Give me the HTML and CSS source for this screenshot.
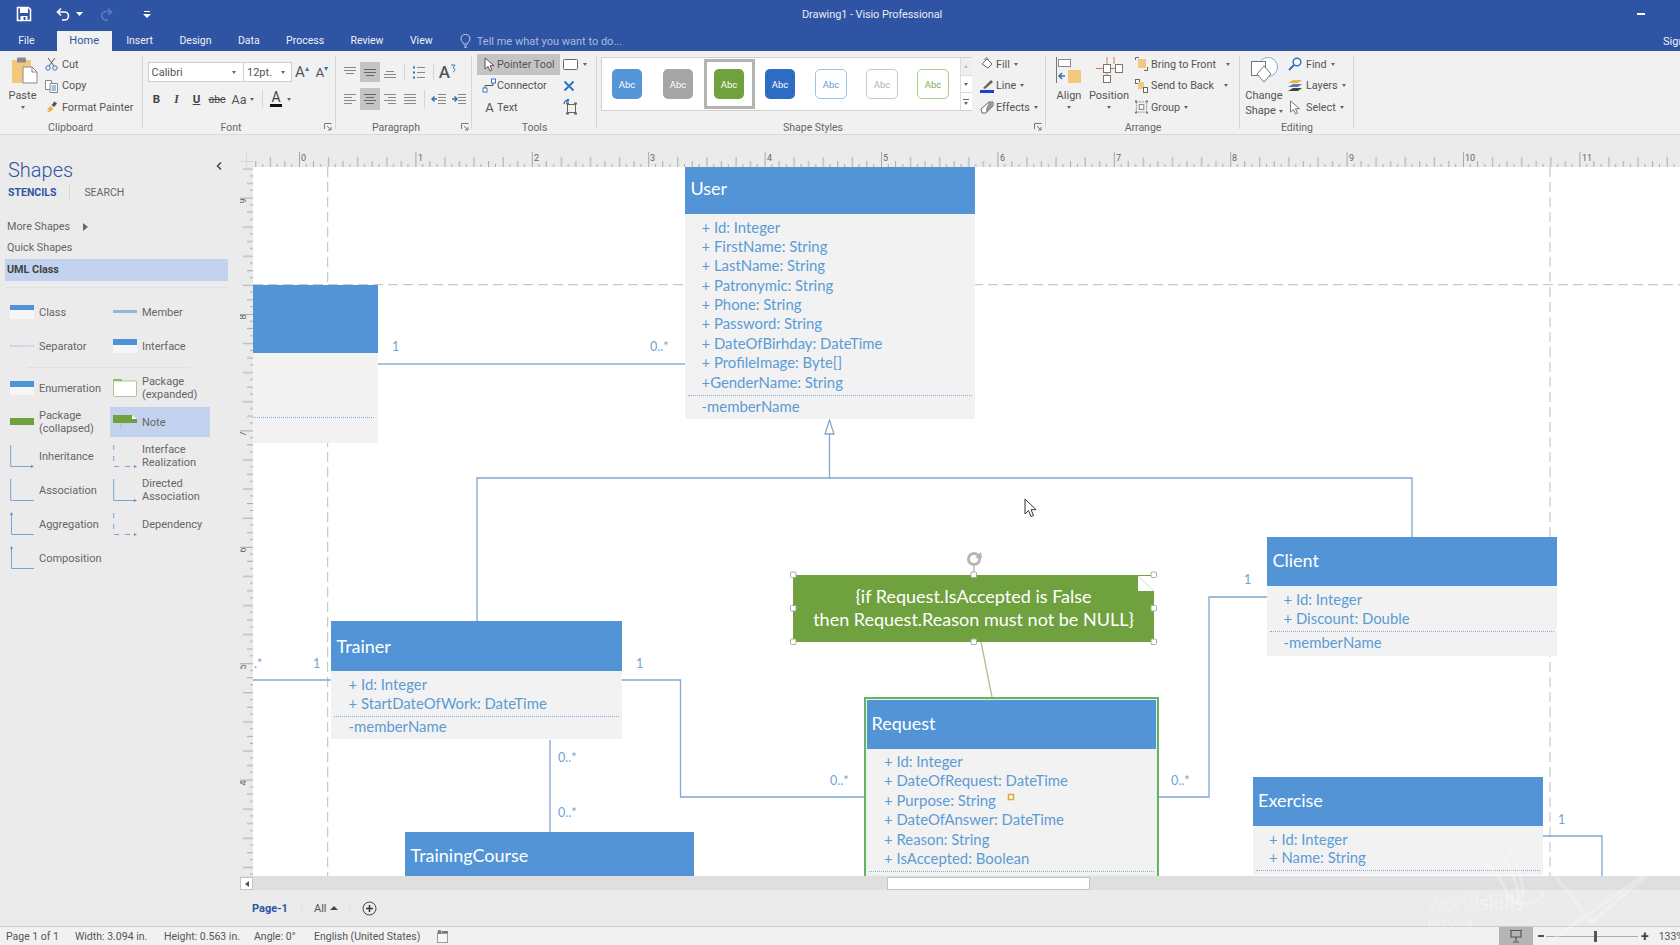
FILE: index.html
```html
<!DOCTYPE html>
<html lang="en">
<head>
<meta charset="utf-8">
<title>Drawing1 - Visio Professional</title>
<link rel="stylesheet" href="styles.css">
</head>
<body>
<div class="app">
  <header class="titlebar">
    <div class="title-row">
      <div class="qat">
        <svg class="q-save" width="16" height="16" viewBox="0 0 16 16"><path d="M1.500 1.500h11l2 2v11h-13z" fill="none" stroke="#fff" stroke-width="1.600"/><rect x="4" y="2" width="8" height="5" fill="#fff"/><rect x="4.500" y="10" width="7" height="4.500" fill="#fff"/><rect x="7.500" y="11" width="2" height="3" fill="#2f54a3"/></svg>
        <svg class="q-undo" width="14" height="14" viewBox="0 0 14 14"><path d="M5 1.500 1.500 5 5 8.500M2 5h6.500a4 4 0 0 1 0 8H6" fill="none" stroke="#fff" stroke-width="1.600"/></svg>
        <svg class="q-caret" width="7" height="4" viewBox="0 0 7 4"><path d="M0 0h7L3.500 4z" fill="#fff"/></svg>
        <svg class="q-redo" width="14" height="14" viewBox="0 0 14 14"><path d="M9 1.500 12.500 5 9 8M11 4.500H6a4.300 4.300 0 1 0 3 8" fill="none" stroke="#5d7cbd" stroke-width="1.600"/></svg>
        <svg class="q-more" width="8" height="8" viewBox="0 0 8 8"><path d="M1 1h6v1H1zM0 4h8L4 8z" fill="#fff"/></svg>
      </div>
      <div class="doc-title">Drawing1 - Visio Professional</div>
      <div class="min-btn"></div>
    </div>
    <nav class="tabs">
      <span class="tab tab-file">File</span>
      <span class="tab tab-on">Home</span>
      <span class="tab">Insert</span>
      <span class="tab">Design</span>
      <span class="tab">Data</span>
      <span class="tab">Process</span>
      <span class="tab">Review</span>
      <span class="tab">View</span>
      <svg class="bulb" width="11" height="14" viewBox="0 0 11 14"><path d="M3.500 10C3 8 1 7 1 4.800a4.500 4.500 0 0 1 9 0C10 7 8 8 7.500 10zM4 12h3M4.500 13.500h2" fill="none" stroke="#c3d0ea" stroke-width="1"/></svg>
      <span class="tell">Tell me what you want to do...</span>
      <span class="sign">Sign in</span>
    </nav>
  </header>

  <section class="ribbon">
    <div class="group g-clip">
      <div class="group-body">
        <div class="big">
          <svg width="27" height="27" viewBox="0 0 27 27"><rect x="1" y="3" width="19" height="23" rx="1" fill="#f2c77e"/><rect x="6" y="0.500" width="9" height="5" rx="1" fill="#8a8a8a"/><path d="M12 10h9l5 5v11H12z" fill="#fff" stroke="#8a8a8a"/><path d="M21 10v5h5" fill="none" stroke="#8a8a8a"/></svg>
          <span class="big-text">Paste</span>
          <i class="caret"></i>
        </div>
        <div class="rows">
          <div class="row"><svg class="ic" width="13" height="14" viewBox="0 0 13 14"><path d="M3 1l6 8M10 1 4 9" stroke="#555" fill="none"/><circle cx="3" cy="11" r="2.200" fill="none" stroke="#3b78c2"/><circle cx="10" cy="11" r="2.200" fill="none" stroke="#3b78c2"/></svg>Cut</div>
          <div class="row"><svg class="ic" width="13" height="14" viewBox="0 0 13 14"><path d="M.500 1.500h6v9h-6z" fill="#fff" stroke="#888"/><path d="M5 4.500h7.500v9H5z" fill="#fff" stroke="#888"/><path d="M6.500 7h4.500M6.500 9h4.500M6.500 11h4.500" stroke="#4a7fc0"/></svg>Copy</div>
          <div class="row"><svg class="ic" width="14" height="14" viewBox="0 0 14 14"><path d="M1 9c3 0 4-2 5-3l3 3c-1 2-4 4-7 4l2-3z" fill="#e9b44c"/><path d="M7 5l3-4 3 2-3 4z" fill="#555"/></svg>Format Painter</div>
        </div>
      </div>
      <div class="group-label">Clipboard</div>
    </div>

    <div class="group g-font">
      <div class="group-body stack">
        <div class="bar">
          <div class="combo c-font"><span>Calibri</span><i class="caret"></i></div>
          <div class="combo c-size"><span>12pt.</span><i class="caret"></i></div>
          <span class="btn fa fa-big">A<b class="up">▴</b></span>
          <span class="btn fa">A<b class="up">▾</b></span>
        </div>
        <div class="bar">
          <span class="btn fs"><b>B</b></span>
          <span class="btn fs"><em>I</em></span>
          <span class="btn fs"><u>U</u></span>
          <span class="btn fs abc"><s>abc</s></span>
          <span class="btn aa">Aa<i class="caret"></i></span>
          <span class="vsep"></span>
          <span class="btn color"><span class="color-a">A</span><i class="caret"></i></span>
        </div>
      </div>
      <div class="group-label">Font<svg class="launch l-font" width="8" height="8" viewBox="0 0 8 8"><path d="M.500 6V.500H7.500M3 3l4 4M4 7h3V4" fill="none" stroke="#777"/></svg></div>
    </div>

    <div class="group g-para">
      <div class="group-body stack">
        <div class="bar">
          <span class="btn"><svg width="14" height="14" viewBox="0 0 14 14"><path d="M1 2.500h12M1 5.500h12M3 8.500h8" stroke="#888"/></svg></span>
          <span class="btn on"><svg width="14" height="14" viewBox="0 0 14 14"><path d="M1 4.500h12M1 7.500h12M3 10.500h8" stroke="#666"/></svg></span>
          <span class="btn"><svg width="14" height="14" viewBox="0 0 14 14"><path d="M3 6.500h8M1 9.500h12M1 12.500h12" stroke="#888"/></svg></span>
          <span class="vsep s-a"></span>
          <span class="btn"><svg width="14" height="14" viewBox="0 0 14 14"><path d="M5 2.500h8M5 7.500h8M5 12.500h8" stroke="#888"/><path d="M1 2.500h2M1 7.500h2M1 12.500h2" stroke="#2e75b6" stroke-width="2"/></svg></span>
          <span class="vsep s-b"></span>
          <span class="btn dir">A<svg width="7" height="9" viewBox="0 0 7 9"><path d="M1 1h4l-2 3c2 0 3 3 0 4" fill="none" stroke="#3b78c2"/></svg></span>
        </div>
        <div class="bar">
          <span class="btn"><svg width="14" height="14" viewBox="0 0 14 14"><path d="M1 2.500h12M1 5.500h8M1 8.500h12M1 11.500h8" stroke="#888"/></svg></span>
          <span class="btn on"><svg width="14" height="14" viewBox="0 0 14 14"><path d="M1 2.500h12M3 5.500h8M1 8.500h12M3 11.500h8" stroke="#666"/></svg></span>
          <span class="btn"><svg width="14" height="14" viewBox="0 0 14 14"><path d="M1 2.500h12M5 5.500h8M1 8.500h12M5 11.500h8" stroke="#888"/></svg></span>
          <span class="btn"><svg width="14" height="14" viewBox="0 0 14 14"><path d="M1 2.500h12M1 5.500h12M1 8.500h12M1 11.500h12" stroke="#888"/></svg></span>
          <span class="vsep s-a"></span>
          <span class="btn"><svg width="16" height="14" viewBox="0 0 16 14"><path d="M7 2.500h8M7 5.500h8M7 8.500h8M7 11.500h8" stroke="#888"/><path d="M6 7H1M3.500 4.500 1 7l2.500 2.500" fill="none" stroke="#2e75b6" stroke-width="1.500"/></svg></span>
          <span class="btn"><svg width="16" height="14" viewBox="0 0 16 14"><path d="M7 2.500h8M7 5.500h8M7 8.500h8M7 11.500h8" stroke="#888"/><path d="M1 7h5M3.500 4.500 6 7 3.500 9.500" fill="none" stroke="#2e75b6" stroke-width="1.500"/></svg></span>
        </div>
      </div>
      <div class="group-label">Paragraph<svg class="launch l-para" width="8" height="8" viewBox="0 0 8 8"><path d="M.500 6V.500H7.500M3 3l4 4M4 7h3V4" fill="none" stroke="#777"/></svg></div>
    </div>

    <div class="group g-tools">
      <div class="group-body tools">
        <div class="row tool tool-on"><svg class="tic" width="11" height="15" viewBox="0 0 11 15"><path d="M1 1v11l3-2.500 2 4.500 2-1-2-4.300h4z" fill="#fff" stroke="#555"/></svg>Pointer Tool</div>
        <div class="row tool2"><svg width="15" height="11" viewBox="0 0 15 11"><rect x=".5" y=".5" width="14" height="10" rx="1" fill="#fff" stroke="#666"/></svg><i class="caret"></i></div>
        <div class="row tool"><svg class="tic" width="15" height="15" viewBox="0 0 15 15"><path d="M3 10V7.500h8V4" fill="none" stroke="#555"/><rect x="1" y="10" width="4" height="4" fill="#fff" stroke="#3b78c2"/><rect x="9.500" y="1" width="4" height="4" fill="#fff" stroke="#3b78c2"/></svg>Connector</div>
        <div class="row tool2"><svg width="12" height="12" viewBox="0 0 12 12"><path d="M1.500 1.500l9 9M10.500 1.500l-9 9" stroke="#2e75c6" stroke-width="2"/></svg></div>
        <div class="row tool"><span class="tic t-a">A</span>Text</div>
        <div class="row tool2"><svg width="15" height="16" viewBox="0 0 15 16"><rect x="4.500" y="5.500" width="8" height="8" fill="none" stroke="#666"/><path d="M3 4.500h3M11 4.500h3M3 14.500h3M11 14.500h3" stroke="#666" stroke-width="2"/><path d="M1 5c0-2.500 2-4 5-4M6 1 4 0M6 1 4 3" fill="none" stroke="#2e75c6" stroke-width="1.300"/></svg></div>
      </div>
      <div class="group-label">Tools</div>
    </div>

    <div class="group g-style">
      <div class="group-body">
        <div class="gallery">
          <div class="cell"><span class="sw sw-blue">Abc</span></div>
          <div class="cell"><span class="sw sw-gray">Abc</span></div>
          <div class="cell cell-on"><span class="sw sw-green">Abc</span></div>
          <div class="cell"><span class="sw sw-navy">Abc</span></div>
          <div class="cell"><span class="sw sw-o-blue">Abc</span></div>
          <div class="cell"><span class="sw sw-o-gray">Abc</span></div>
          <div class="cell"><span class="sw sw-o-green">Abc</span></div>
          <div class="gal-scroll">
            <span class="gs gs-up"><i class="cu"></i></span>
            <span class="gs"><i class="caret"></i></span>
            <span class="gs gs-more"><i class="bar-m"></i><i class="caret"></i></span>
          </div>
        </div>
        <div class="rows r-fill">
          <div class="row"><svg class="ic" width="14" height="14" viewBox="0 0 14 14"><path d="M2 7l5-5 5 5-4 4z" fill="#fff" stroke="#666"/><path d="M5 3c0-3 3-3 3 0" fill="none" stroke="#666"/></svg>Fill<i class="caret"></i></div>
          <div class="row"><svg class="ic" width="14" height="14" viewBox="0 0 14 14"><path d="M3 9 11 1l2 2-8 7z" fill="#666"/><rect y="11" width="14" height="3" fill="#1c3fd0"/></svg>Line<i class="caret"></i></div>
          <div class="row"><svg class="ic" width="14" height="14" viewBox="0 0 14 14"><path d="M1 9 9 2h4v4l-7 7H2z" fill="#fff" stroke="#666"/><path d="M9 2h4v4l-7 7 0-4z" fill="#999"/></svg>Effects<i class="caret"></i></div>
        </div>
      </div>
      <div class="group-label">Shape Styles<svg class="launch l-style" width="8" height="8" viewBox="0 0 8 8"><path d="M.500 6V.500H7.500M3 3l4 4M4 7h3V4" fill="none" stroke="#777"/></svg></div>
    </div>

    <div class="group g-arr">
      <div class="group-body">
        <div class="big b-align">
          <svg width="26" height="26" viewBox="0 0 26 26"><path d="M.500 0v26" stroke="#777"/><rect x="2.500" y="2.500" width="12" height="7" fill="#fff" stroke="#888"/><rect x="12" y="13" width="13" height="13" fill="#f2c77e"/><path d="M9 19H3M6 16l-3 3 3 3" fill="none" stroke="#2e75b6" stroke-width="1.500"/></svg>
          <span class="big-text">Align</span>
          <i class="caret"></i>
        </div>
        <div class="big b-pos">
          <svg width="27" height="26" viewBox="0 0 27 26"><rect x="7.500" y="7.500" width="7" height="8" fill="#fff" stroke="#777"/><rect x="19.500" y="7.500" width="7" height="8" fill="#fff" stroke="#777"/><rect x="7.500" y="18.500" width="7" height="7" fill="#fff" stroke="#777"/><path d="M11 7V0M0 11.500h7M14.500 11.500h5M11 15.500v3M18 0v7" stroke="#d9794a"/></svg>
          <span class="big-text">Position</span>
          <i class="caret"></i>
        </div>
        <div class="rows r-arr">
          <div class="row"><svg class="ic" width="13" height="14" viewBox="0 0 13 14"><path d="M.500 3V.500H4M12.500 10v3.500H9" fill="none" stroke="#666"/><rect x="3" y="2" width="8" height="9" fill="#f2c77e"/></svg>Bring to Front<i class="caret c-far"></i></div>
          <div class="row"><svg class="ic" width="13" height="14" viewBox="0 0 13 14"><rect x=".5" y=".5" width="4" height="4" fill="#fff" stroke="#666"/><rect x="3" y="3" width="6" height="7" fill="#f2c77e"/><rect x="8.500" y="8.500" width="4" height="5" fill="#fff" stroke="#666"/></svg>Send to Back<i class="caret c-far"></i></div>
          <div class="row"><svg class="ic" width="14" height="14" viewBox="0 0 14 14"><rect x="1.500" y="1.500" width="11" height="11" fill="none" stroke="#888" stroke-dasharray="2 1"/><rect x="4.500" y="4.500" width="5" height="5" fill="#fff" stroke="#777"/><path d="M0 0h2v2H0zM12 0h2v2h-2zM0 12h2v2H0zM12 12h2v2h-2z" fill="#2e75b6"/></svg>Group<i class="caret"></i></div>
        </div>
      </div>
      <div class="group-label">Arrange</div>
    </div>

    <div class="group g-edit">
      <div class="group-body">
        <div class="big b-change">
          <svg width="27" height="27" viewBox="0 0 27 27"><circle cx="17" cy="11" r="9.500" fill="#fff" stroke="#7fa9d6"/><rect x=".5" y="5.500" width="14" height="14" fill="#fff" stroke="#777"/><path d="M13 10l7 8-7 8-7-8z" fill="#fff" stroke="#777"/></svg>
          <span class="big-text">Change</span>
          <span class="big-text shape-line">Shape<i class="caret"></i></span>
        </div>
        <div class="rows r-edit">
          <div class="row"><svg class="ic" width="14" height="14" viewBox="0 0 14 14"><circle cx="9" cy="5" r="3.800" fill="#fff" stroke="#2e75b6" stroke-width="1.500"/><path d="M6 8l-5 5" stroke="#2e75b6" stroke-width="2"/></svg>Find<i class="caret"></i></div>
          <div class="row"><svg class="ic" width="14" height="14" viewBox="0 0 14 14"><path d="M0 4 5 1h9l-4 3z" fill="#e9b44c"/><path d="M0 8 5 5h9l-4 3z" fill="#5b7fa8"/><path d="M0 12 5 9h9l-4 3z" fill="#444"/></svg>Layers<i class="caret"></i></div>
          <div class="row"><svg class="ic" width="11" height="15" viewBox="0 0 11 15"><path d="M1 1v11l3-2.500 2 4.500 2-1-2-4.300h4z" fill="#fff" stroke="#777"/></svg>Select<i class="caret"></i></div>
        </div>
      </div>
      <div class="group-label">Editing</div>
    </div>
  </section>

  <div class="workspace">
    <aside class="shapes">
      <div class="shapes-head"><span class="shapes-title">Shapes</span><svg width="6" height="8" viewBox="0 0 6 8"><path d="M5 .5 1.500 4 5 7.500" fill="none" stroke="#444" stroke-width="1.500"/></svg></div>
      <div class="shapes-tabs"><b>STENCILS</b><span class="st-sep"></span><span>SEARCH</span></div>
      <div class="sl sl-more">More Shapes<i class="tri"></i></div>
      <div class="sl sl-quick">Quick Shapes</div>
      <div class="sl sl-uml">UML Class</div>
      <div class="sdiv"></div>
      <div class="stencil s-one">
        <div class="st"><svg class="si" width="24" height="14" viewBox="0 0 24 14"><rect width="24" height="14" fill="#f6f6f6"/><rect width="24" height="5" fill="#4e92d8"/></svg>Class</div>
        <div class="st"><svg class="si" width="24" height="14" viewBox="0 0 24 14"><rect y="5" width="24" height="3" fill="#90b8dd"/></svg>Member</div>
        <div class="st"><svg class="si" width="24" height="14" viewBox="0 0 24 14"><path d="M0 7h24" stroke="#8ab4dc" stroke-dasharray="1.500 1"/></svg>Separator</div>
        <div class="st"><svg class="si" width="24" height="14" viewBox="0 0 24 14"><rect width="24" height="14" fill="#f6f6f6"/><rect width="24" height="6" fill="#4e92d8"/></svg>Interface</div>
      </div>
      <div class="sdiv2"></div>
      <div class="stencil">
        <div class="st"><svg class="si" width="24" height="14" viewBox="0 0 24 14"><rect width="24" height="14" fill="#f6f6f6"/><rect width="24" height="6" fill="#4e92d8"/></svg>Enumeration</div>
        <div class="st"><svg class="si" width="24" height="18" viewBox="0 0 24 18"><path d="M.5 2V.5h8V2" fill="#8eb363" stroke="#8eb363"/><rect x=".5" y="2" width="23" height="15.500" rx="1" fill="#fff" stroke="#a9c58c"/></svg><span>Package<br>(expanded)</span></div>
        <div class="st"><svg class="si" width="24" height="8" viewBox="0 0 24 8"><rect width="24" height="7" fill="#70a13f"/></svg><span>Package<br>(collapsed)</span></div>
        <div class="st st-on"><svg class="si" width="24" height="14" viewBox="0 0 24 14"><path d="M0 0h19l5 4v4H0z" fill="#70a13f"/><path d="M19 0v4h5z" fill="#fff"/><path d="M9 8l-2 5" stroke="#a9c58c"/></svg>Note</div>
        <div class="st"><svg class="si" width="24" height="24" viewBox="0 0 24 24"><path d="M.7 1v21.500H22" fill="none" stroke="#7aa6d4"/><path d="M21 21v3l3-1.500z" fill="#5b8fc7"/></svg>Inheritance</div>
        <div class="st"><svg class="si" width="24" height="24" viewBox="0 0 24 24"><path d="M.7 1v21.500H22" fill="none" stroke="#7aa6d4" stroke-dasharray="5 6"/><path d="M21 21v3l3-1.500z" fill="#5b8fc7"/></svg><span>Interface<br>Realization</span></div>
        <div class="st"><svg class="si" width="24" height="24" viewBox="0 0 24 24"><path d="M.7 1v21.500H24" fill="none" stroke="#7aa6d4"/></svg>Association</div>
        <div class="st"><svg class="si" width="24" height="24" viewBox="0 0 24 24"><path d="M.7 1v21.500H22" fill="none" stroke="#7aa6d4"/><path d="M21 21v3l3-1.500z" fill="#5b8fc7"/></svg><span>Directed<br>Association</span></div>
        <div class="st"><svg class="si" width="24" height="24" viewBox="0 0 24 24"><path d="M1.500 1v21.500H24" fill="none" stroke="#7aa6d4"/><path d="M0 3l1.500-3L3 3z" fill="#5b8fc7"/></svg>Aggregation</div>
        <div class="st"><svg class="si" width="24" height="24" viewBox="0 0 24 24"><path d="M.7 1v21.500H22" fill="none" stroke="#7aa6d4" stroke-dasharray="5 6"/><path d="M21 21v3l3-1.500z" fill="#5b8fc7"/></svg>Dependency</div>
        <div class="st"><svg class="si" width="24" height="24" viewBox="0 0 24 24"><path d="M1.500 1v21.500H24" fill="none" stroke="#7aa6d4"/><path d="M0 3l1.500-3L3 3z" fill="#5b8fc7"/></svg>Composition</div>
      </div>
    </aside>

    <main class="drawing">
      <div class="ruler-row">
        <svg class="corner" width="13" height="15" viewBox="0 0 13 15"><path d="M6.500 1v13M0 9.500h13" stroke="#d6d6d6"/></svg>
        <svg class="hruler" width="1427" height="15" viewBox="253 152 1427 15">
          <defs>
            <pattern id="hticks" x="299" y="152" width="116.400" height="15" patternUnits="userSpaceOnUse">
              <path d="M.5 0v15M29.600 5v10M58.700 5v10M87.800 5v10M14.500 9v6M44 9v6M73.200 9v6M102.300 9v6M7.300 12v3M21.800 12v3M36.400 12v3M51 12v3M65.500 12v3M80.100 12v3M94.600 12v3M109.100 12v3" stroke="#999" fill="none" stroke-width=".8"/>
            </pattern>
          </defs>
          <rect x="253" y="152" width="1427" height="15" fill="url(#hticks)"/>
          <g class="rnum">
            <text x="301" y="161">0</text><text x="418" y="161">1</text><text x="534" y="161">2</text><text x="650" y="161">3</text><text x="767" y="161">4</text><text x="883" y="161">5</text><text x="1000" y="161">6</text><text x="1116" y="161">7</text><text x="1232" y="161">8</text><text x="1349" y="161">9</text><text x="1465" y="161">10</text><text x="1582" y="161">11</text>
          </g>
        </svg>
      </div>
      <div class="canvas-row">
        <svg class="vruler" width="13" height="709" viewBox="240 167 13 709">
          <defs>
            <pattern id="vticks" x="240" y="197.600" width="13" height="116.400" patternUnits="userSpaceOnUse">
              <path d="M0 .5h13M3 29.600h10M3 58.700h10M3 87.800h10M7 14.500h6M7 44h6M7 73.200h6M7 102.300h6M10 7.300h3M10 21.800h3M10 36.400h3M10 51h3M10 65.500h3M10 80.100h3M10 94.600h3M10 109.100h3" stroke="#999" fill="none" stroke-width=".8"/>
            </pattern>
          </defs>
          <rect x="240" y="167" width="13" height="709" fill="url(#vticks)"/>
          <g class="rnum">
            <text transform="translate(246 201) rotate(-90)" text-anchor="middle">9</text>
            <text transform="translate(246 317) rotate(-90)" text-anchor="middle">8</text>
            <text transform="translate(246 434) rotate(-90)" text-anchor="middle">7</text>
            <text transform="translate(246 550) rotate(-90)" text-anchor="middle">6</text>
            <text transform="translate(246 667) rotate(-90)" text-anchor="middle">5</text>
            <text transform="translate(246 783) rotate(-90)" text-anchor="middle">4</text>
          </g>
        </svg>
        <div class="canvas">
          <svg class="wires" width="1427" height="709" viewBox="253 167 1427 709">
            <g class="guides">
              <path d="M327.700 167V876M1550 167V876M253 284.700H1680"/>
            </g>
            <g class="links">
              <path class="thick" d="M378 364H685"/>
              <path d="M829.500 434V478M477 621V478H1412V537"/>
              <path d="M253 680H331"/>
              <path d="M621.500 680H680.500V797H865"/>
              <path d="M550 740V832"/>
              <path d="M1159 797H1209V597H1268"/>
              <path d="M1543 836H1602V876"/>
              <path class="note-link" d="M981 642 992 697"/>
              <path class="arrow" d="M829.500 420 825 434H834z"/>
            </g>
            <g class="tags">
              <text x="392" y="351">1</text><text x="650" y="351">0..*</text>
              <text x="254" y="668">.*</text><text x="313" y="668">1</text>
              <text x="636" y="668">1</text><text x="830" y="785">0..*</text>
              <text x="558" y="762">0..*</text><text x="558" y="817">0..*</text>
              <text x="1171" y="785">0..*</text><text x="1244" y="584">1</text>
              <text x="1558" y="824">1</text>
            </g>
          </svg>

          <div class="node n-cut">
            <div class="head"></div>
            <div class="body"><div class="sep"></div></div>
          </div>

          <div class="node n-user">
            <div class="head">User</div>
            <div class="body">
              <div class="item">+ Id: Integer</div>
              <div class="item">+ FirstName: String</div>
              <div class="item">+ LastName: String</div>
              <div class="item">+ Patronymic: String</div>
              <div class="item">+ Phone: String</div>
              <div class="item">+ Password: String</div>
              <div class="item">+ DateOfBirhday: DateTime</div>
              <div class="item">+ ProfileImage: Byte[]</div>
              <div class="item">+GenderName: String</div>
              <div class="sep"></div>
              <div class="item">-memberName</div>
            </div>
          </div>

          <div class="node n-client">
            <div class="head">Client</div>
            <div class="body">
              <div class="item">+ Id: Integer</div>
              <div class="item">+ Discount: Double</div>
              <div class="sep"></div>
              <div class="item">-memberName</div>
            </div>
          </div>

          <div class="node n-trainer">
            <div class="head">Trainer</div>
            <div class="body">
              <div class="item">+ Id: Integer</div>
              <div class="item">+ StartDateOfWork: DateTime</div>
              <div class="sep"></div>
              <div class="item">-memberName</div>
            </div>
          </div>

          <div class="node n-course">
            <div class="head">TrainingCourse</div>
          </div>

          <div class="node n-request">
            <div class="head">Request</div>
            <div class="body">
              <div class="item">+ Id: Integer</div>
              <div class="item">+ DateOfRequest: DateTime</div>
              <div class="item">+ Purpose: String</div>
              <div class="item">+ DateOfAnswer: DateTime</div>
              <div class="item">+ Reason: String</div>
              <div class="item">+ IsAccepted: Boolean</div>
              <div class="sep"></div>
            </div>
          </div>

          <div class="node n-exercise">
            <div class="head">Exercise</div>
            <div class="body">
              <div class="item">+ Id: Integer</div>
              <div class="item">+ Name: String</div>
              <div class="sep"></div>
            </div>
          </div>

          <div class="note">{if Request.IsAccepted is False<br>then Request.Reason must not be NULL}</div>

          <svg class="overlay" width="1427" height="709" viewBox="253 167 1427 709">
            <path d="M1138 576h16v15h-16z" fill="#fff"/><path d="M1138 576l16 15" stroke="#d8d8d8"/>
            <path d="M974 566v9" stroke="#999"/>
            <circle cx="974" cy="559" r="5.500" fill="none" stroke="#b5b5b5" stroke-width="3"/>
            <path d="M975 558h7l-1-6z" fill="#b5b5b5"/>
            <g class="handles">
              <rect x="790.500" y="572" width="5.500" height="5.500" rx="1"/><rect x="971" y="572" width="5.500" height="5.500" rx="1"/><rect x="1151" y="572" width="5.500" height="5.500" rx="1"/>
              <rect x="790.500" y="605.500" width="5.500" height="5.500" rx="1"/><rect x="1151" y="605.500" width="5.500" height="5.500" rx="1"/>
              <rect x="790.500" y="639" width="5.500" height="5.500" rx="1"/><rect x="971" y="639" width="5.500" height="5.500" rx="1"/><rect x="1151" y="639" width="5.500" height="5.500" rx="1"/>
            </g>
            <rect x="1008.500" y="794.500" width="5" height="5" fill="#fff" stroke="#d8a93a" stroke-width="1.500"/>
            <path d="M1025 499v15l3.500-3.500 2.500 6 2.500-1-2.500-5.800h5z" fill="#fff" stroke="#333"/>
          </svg>
        </div>
      </div>
      <div class="scroll-row">
        <span class="sc-left"><i class="tri-l"></i></span>
        <span class="sc-thumb"></span>
      </div>
      <div class="page-row">
        <span class="page-on">Page-1</span>
        <span class="p-sep"></span>
        <span class="page-all">All<i class="tri-u"></i></span>
        <span class="p-sep"></span>
        <svg width="15" height="15" viewBox="0 0 15 15"><circle cx="7.500" cy="7.500" r="6.500" fill="none" stroke="#444"/><path d="M4 7.500h7M7.500 4v7" stroke="#333" stroke-width="1.500"/></svg>
      </div>
    </main>
  </div>

  <footer class="status">
    <span class="stat s1">Page 1 of 1</span>
    <span class="stat s2">Width: 3.094 in.</span>
    <span class="stat s3">Height: 0.563 in.</span>
    <span class="stat s4">Angle: 0°</span>
    <span class="stat s5">English (United States)</span>
    <svg width="11" height="13" viewBox="0 0 11 13"><rect x=".5" y="3.500" width="10" height="9" fill="#f6f6f6" stroke="#999"/><rect x="5" y="1" width="6" height="2" fill="#777"/><circle cx="2.500" cy="2" r="2" fill="#777"/></svg>
    <div class="zoom">
      <span class="present"><svg width="14" height="14" viewBox="0 0 14 14"><path d="M1 1.500h12M2 2v6h10V2M7 8v4M4 13h6" fill="none" stroke="#555" stroke-width="1.200"/></svg></span>
      <span class="z-minus"></span>
      <span class="z-track"><i class="z-thumb"></i></span>
      <span class="z-plus">+</span>
      <span class="z-val">133%</span>
    </div>
  </footer>

  <div class="wm">
    <svg class="wm-art" width="220" height="100" viewBox="0 0 220 100"><path d="M50 10c12 10 20 28 22 48M38 22c12 8 22 24 24 38M60 4c10 14 16 34 16 52M60 50a18 12 0 0 0 36 0M105 30l40 50 70-60-110 78" fill="none" stroke="#fff" stroke-opacity=".25" stroke-width="3"/></svg>
    <span class="wm1">world<b>skills</b></span>
    <span class="wm2">Russia</span>
  </div>
</div>
</body>
</html>
```
FILE: styles.css
```css
*{box-sizing:border-box}
html,body{margin:0;padding:0;height:100%;overflow:hidden}
body{font-family:Roboto,"Liberation Sans",sans-serif;font-size:11px;color:#505050;background:#ebebeb}
.app{width:1680px;height:945px;display:flex;flex-direction:column;position:relative;overflow:hidden}
i{display:block;font-style:normal}

/* title bar */
.titlebar{height:51px;background:#2f54a3;color:#fff;flex:none;display:flex;flex-direction:column}
.title-row{height:31px;display:flex;align-items:center;padding-bottom:3px}
.qat{width:802px;display:flex;align-items:center;padding-left:16px;flex:none}
.q-undo{margin-left:24px}
.q-caret{margin-left:6px}
.q-redo{margin-left:16px}
.q-more{margin-left:30px}
.doc-title{width:140px;text-align:center;white-space:nowrap;font-size:11px;letter-spacing:-.1px;color:#e6ebf5}
.min-btn{margin-left:695px;width:8px;height:2px;background:#fff}
.tabs{height:20px;display:flex;align-items:center;font-size:10.500px;color:#eef1f8}
.tab{padding:0 13.200px;white-space:nowrap;line-height:20px}
.tab-file{margin-left:5px;margin-right:9px}
.tab-on{background:#f1f1f1;color:#2f54a3;font-size:11px;padding:0 13px 0 12.500px;margin-right:1px}
.bulb{margin-left:14px;flex:none}
.tell{margin-left:6px;color:#a9bbdf;white-space:nowrap;font-size:11px}
.sign{margin-left:auto;margin-right:-16px;white-space:nowrap;font-size:11px}

/* ribbon */
.ribbon{height:84px;background:#f1f1f1;flex:none;display:flex;border-bottom:1px solid #dadada;color:#555}
.group{position:relative;display:flex;flex-direction:column;flex:none}
.group::after{content:"";position:absolute;right:0;top:5px;bottom:5px;width:1px;background:#d6d6d6}
.group-body{height:69px;padding-top:2.500px;display:flex;align-items:flex-start}
.group-label{height:15px;line-height:17px;text-align:center;font-size:10.500px;color:#666;position:relative}
.launch{position:absolute;top:4px}
.g-clip{width:143px}
.g-font{width:193px}
.g-para{width:136px}
.g-tools{width:125px}
.g-style{width:449px}
.g-arr{width:194px}
.g-edit{width:114px}
.g-clip .group-label{padding-right:2px}
.g-font .group-label{padding-right:17px}
.g-para .group-label{padding-right:16px}
.g-style .group-label{padding-right:17px}
.l-font{right:4px}
.l-para{right:3px}
.l-style{right:4px}

.row{height:21.500px;display:flex;align-items:center;white-space:nowrap;font-size:10.800px;color:#555}
.rows{display:flex;flex-direction:column}
.ic{flex:none;margin-right:4px}
.caret{width:0;height:0;border-left:2.500px solid transparent;border-right:2.500px solid transparent;border-top:3px solid #666;flex:none}
.row .caret{margin-left:4px}
.c-far{margin-left:10px !important}

.big{display:flex;flex-direction:column;align-items:center;padding-top:3px;flex:none;font-size:11px}
.big svg{display:block;flex:none}
.big-text{line-height:14px;margin-top:6px;white-space:nowrap}
.big .caret{margin-top:3px}
.g-clip .big{width:45px}
.g-clip .big svg{margin-left:3px}
.g-clip .big-text{margin-top:5px}
.g-clip .row svg.ic{width:13px}

.stack{flex-direction:column;padding-top:11px}
.bar{display:flex;align-items:center;height:20px}
.bar + .bar{height:22px;margin-top:6px}
.btn{width:20px;height:100%;display:flex;align-items:center;justify-content:center;flex:none;color:#555}
.btn.on{background:#c4c4c4}
.vsep{width:1px;height:18px;background:#d6d6d6;flex:none}
.g-font .group-body{padding-left:4.500px}
.combo{height:20px;background:#fff;border:1px solid #cfcfcf;display:flex;align-items:center;justify-content:space-between;padding:0 7px 0 3px;font-size:11px;color:#555;flex:none}
.c-font{width:96.500px}
.c-size{width:48px;border-left:0;padding:0 6px 0 3px}
.fa{font-size:13.500px;position:relative;align-items:center}
.fa-big{font-size:15px}
.up{font-size:8px;color:#2e75b6;margin-top:-8px;font-weight:400}
.g-font .bar + .bar{margin-left:-1px}
.fs{font-size:11.500px;font-family:"Liberation Serif",serif;color:#444}
.fs b{font-family:Roboto,sans-serif}
.fs em{font-family:"Liberation Serif",serif;font-weight:700}
.fs u{font-family:Roboto,sans-serif;font-weight:700}
.abc{font-family:Roboto,sans-serif;font-size:10.500px;width:21px}
.aa{width:31px;font-size:12.500px;gap:4px}
.color{width:30px;gap:5px;margin-left:3px}
.color-a{font-size:14px;line-height:13px;border-bottom:3px solid #111;padding:0 1px;color:#444}
.g-font .vsep{margin-left:3px}
.g-para .group-body{padding-left:4px}
.s-a{margin:0 4px}
.s-b{margin:0 4px}
.dir{font-size:17px;font-weight:500;gap:0}
.dir svg{margin-top:-8px}

.tools{display:grid;grid-template-columns:83px 32px;grid-auto-rows:21.500px;padding-left:5px}
.tool{padding-left:5px}
.tool-on{background:#c4c4c4}
.tic{flex:none;width:15px}
.t-a{font-size:13px;text-align:center}
.tool2{padding-left:3px}
.tool2 .caret{margin-left:5px}

.g-style .group-body{padding-left:3.500px}
.gallery{width:371.500px;height:54px;margin-top:3.500px;background:#fff;border:1px solid #cfcfcf;display:flex;align-items:center;flex:none}
.cell{width:51px;height:50px;display:flex;align-items:center;justify-content:center;flex:none}
.cell-on{border:3px solid #b3b3b3}
.sw{width:30px;height:30px;border-radius:5px;display:flex;align-items:center;justify-content:center;font-size:9.500px;color:#fff;flex:none}
.sw-blue{background:#5496d8}
.sw-gray{background:#a5a5a5}
.sw-green{background:#6fa23d}
.sw-navy{background:#2f6cc4}
.sw-o-blue{width:32px;border:1px solid #9cc2e5;background:#fff;color:#5b9bd5}
.sw-o-gray{width:32px;border:1px solid #c8c8c8;background:#fff;color:#b0b0b0}
.sw-o-green{width:32px;border:1px solid #a9d18e;background:#fff;color:#80aa55}
.gal-scroll{margin-left:1px;width:12px;align-self:stretch;display:flex;flex-direction:column;flex:none;border-left:1px solid #dcdcdc;background:#f1f1f1}
.gs{flex:1;display:flex;flex-direction:column;align-items:center;justify-content:center;gap:2px;border-bottom:1px solid #dcdcdc;background:#fff}
.gs:last-child{border-bottom:0}
.gs-up{background:#efefef}
.cu{width:0;height:0;border-left:2.500px solid transparent;border-right:2.500px solid transparent;border-bottom:3px solid #bdbdbd}
.bar-m{width:6px;height:1px;background:#666}
.r-fill{margin-left:8px}
.r-fill .ic{margin-right:2px}
.g-arr .group-body{padding-left:4px}
.b-align{width:38px}
.b-pos{width:42px}
.r-arr{margin-left:5px}
.r-arr .ic{width:13px;margin-right:3px}
.g-edit .group-body{padding-left:4px}
.b-change{width:40px;padding-top:2.500px}
.shape-line{display:flex;align-items:center;gap:3px;margin-top:1px}
.shape-line .caret{margin-top:0}
.r-edit{margin-left:4px}
.r-edit .ic{margin-right:4px;width:14px}

/* workspace */
.workspace{flex:1;display:flex;min-height:0}
.shapes{width:240px;flex:none;padding-top:23px;background:#ebebeb}
.shapes-head{height:24px;display:flex;align-items:center;justify-content:space-between;padding:0 18px 0 8px}
.shapes-head svg{margin-top:-8px}
.shapes-title{font-size:20px;font-weight:300;color:#2f54a3;line-height:24px}
.shapes-tabs{height:16px;margin-top:2px;padding-left:8px;display:flex;align-items:center;font-size:10.500px;color:#666}
.shapes-tabs b{color:#2f54a3;font-weight:700}
.st-sep{width:1px;height:14px;background:#d5d5d5;margin:0 14px 0 13px}
.sl{height:20px;line-height:20px;padding-left:7px;font-size:10.800px;color:#666}
.sl-more{margin-top:17px;display:flex;align-items:center}
.tri{width:0;height:0;border-top:4px solid transparent;border-bottom:4px solid transparent;border-left:5px solid #666;margin-left:13px}
.sl-quick{margin-top:1px}
.sl-uml{height:22px;line-height:22px;margin:1px 12px 0 5px;padding-left:2px;background:#c2d2ef;font-weight:700;color:#444}
.sdiv{height:1px;background:#e0e0e0;margin:6px 12px 0 5px}
.stencil{display:grid;grid-template-columns:103px 103px;grid-auto-rows:34px;margin-left:7px}
.s-one{margin-top:7px}
.sdiv2{height:1px;background:#e0e0e0;margin:4px 50px 3px 28px}
.st{display:flex;align-items:center;padding-left:3px;font-size:11px;line-height:13px;color:#666;white-space:nowrap}
.si{flex:none;width:24px;margin-right:5px}
.st-on{background:#c2d2ef;margin:2px 3px 2px 0}

.drawing{flex:1;min-width:0;display:flex;flex-direction:column;padding-top:17px}
.ruler-row{height:15px;display:flex;flex:none}
.ruler-row svg,.canvas-row svg{display:block}
.corner{flex:none}
.hruler{flex:none}
.rnum text{font-size:9px;fill:#666;font-family:Roboto,sans-serif}
.canvas-row{height:709px;display:flex;flex:none}
.vruler{flex:none}
.canvas{position:relative;width:1427px;height:709px;background:#fff;overflow:hidden;flex:none;font-family:Lato,Roboto,sans-serif}
.wires,.overlay{position:absolute;left:0;top:0}
.guides path{fill:none;stroke:#bdbdbd;stroke-width:1;stroke-dasharray:10 5}
.links path{fill:none;stroke:#7fa8d2;stroke-width:1.300}
.links .thick{stroke:#a9c4e0;stroke-width:2}
.links .note-link{stroke:#a9c58c}
.links .arrow{fill:#fff}
.tags text{font-size:12.500px;fill:#6ea3d8;font-family:Lato,sans-serif}
.handles rect{fill:#fff;stroke:#aaa;stroke-width:1}

.node{position:absolute}
.head{background:#5394d6;color:#fff;font-size:18px;display:flex;align-items:center;padding-left:5.500px;white-space:nowrap}
.body{background:#f2f2f2;padding:3.500px 3px 3px}
.item{height:19.400px;line-height:19.400px;padding-left:13.500px;font-size:14.900px;color:#5b9bd5;white-space:nowrap}
.sep{border-top:1px dotted #7fb0de;margin:3px 0 1px}
.n-user{left:432px;top:0;width:290px}
.n-user .head{height:47px;padding-bottom:6px}
.n-cut{left:0;top:118px;width:125px}
.n-cut .head{height:68px}
.n-cut .body{height:90px;padding:61px 4px 0 0}
.n-client{left:1014px;top:370px;width:290px}
.n-client .head{height:49px;padding-bottom:4px}
.n-trainer{left:78px;top:454px;width:290.500px}
.n-trainer .head{height:50px}
.n-trainer .item{padding-left:14.500px}
.n-trainer .item:nth-child(2){margin-top:.6px}
.n-trainer .sep{margin:2px 0 0}
.n-course{left:152px;top:664.500px;width:289px}
.n-course .head{height:60px;padding-bottom:14px}
.n-request{left:611px;top:530px;width:295px;border:2px solid #66b366;outline:1px solid #e3f0e3;outline-offset:-3px;background:#fff}
.n-request .head{height:50px;padding-bottom:2px}
.n-request .body{padding-top:3px}
.n-request .item{padding-left:15px}
.n-exercise{left:999.500px;top:610px;width:290.500px}
.n-exercise .head{height:49px;padding-bottom:4px}
.n-exercise .item{height:18.500px;line-height:18.500px}
.note{position:absolute;left:540px;top:408px;width:361px;height:67px;background:#70a13f;color:#fff;font-size:18px;line-height:23px;text-align:center;display:flex;align-items:center;justify-content:center;padding-bottom:2px}

.scroll-row{height:14px;flex:none;background:#dfdfdf;position:relative;display:flex}
.sc-left{width:13px;height:13px;margin-top:1px;background:#fff;border:1px solid #c4c4c4;display:flex;align-items:center;justify-content:center;flex:none}
.tri-l{width:0;height:0;border-top:3px solid transparent;border-bottom:3px solid transparent;border-right:4px solid #555}
.sc-thumb{width:203px;height:13px;margin:1px 0 0 634px;background:#fff;border:1px solid #c4c4c4;flex:none}
.page-row{flex:1;display:flex;align-items:center;padding-left:12px;font-size:11px;color:#555}
.page-on{color:#2f54a3;font-weight:700;width:37px}
.p-sep{width:1px;height:16px;background:#e2e2e2;margin:0 12px}
.page-all{display:flex;align-items:center;gap:3px;width:23px}
.tri-u{width:0;height:0;border-left:4px solid transparent;border-right:4px solid transparent;border-bottom:4px solid #444}

.status{height:19px;flex:none;background:#f1f1f1;border-top:1px solid #cdcdcd;display:flex;align-items:center;font-size:10.500px;color:#555;white-space:nowrap}
.stat{flex:none}
.s1{margin-left:6px;width:69px}
.s2{width:89px}
.s3{width:90px}
.s4{width:60px}
.s5{width:123px}
.zoom{margin-left:auto;display:flex;align-items:center;height:100%;width:181px;overflow:hidden;flex:none}
.present{width:34px;height:100%;background:#b5b5b5;display:flex;align-items:center;justify-content:center;flex:none}
.z-minus{width:6px;height:2px;background:#555;margin-left:5px;flex:none}
.z-track{width:92px;height:1px;background:#aaa;margin-left:2px;position:relative;flex:none}
.z-thumb{position:absolute;left:48px;top:-5px;width:3px;height:11px;background:#555}
.z-plus{font-size:14px;font-weight:700;margin-left:3px;flex:none;color:#444}
.z-val{margin-left:10px;flex:none}

.wm{position:absolute;left:1427px;top:892px;color:rgba(255,255,255,.4);display:flex;flex-direction:column;pointer-events:none}
.wm-art{position:absolute;left:20px;top:-50px}
.wm1{font-size:22px;font-weight:300;line-height:20px;font-family:Lato,sans-serif;letter-spacing:-.3px;position:relative}
.wm2{font-size:17px;font-weight:300;line-height:14px;margin-top:3px;font-family:Lato,sans-serif;position:relative}
```
